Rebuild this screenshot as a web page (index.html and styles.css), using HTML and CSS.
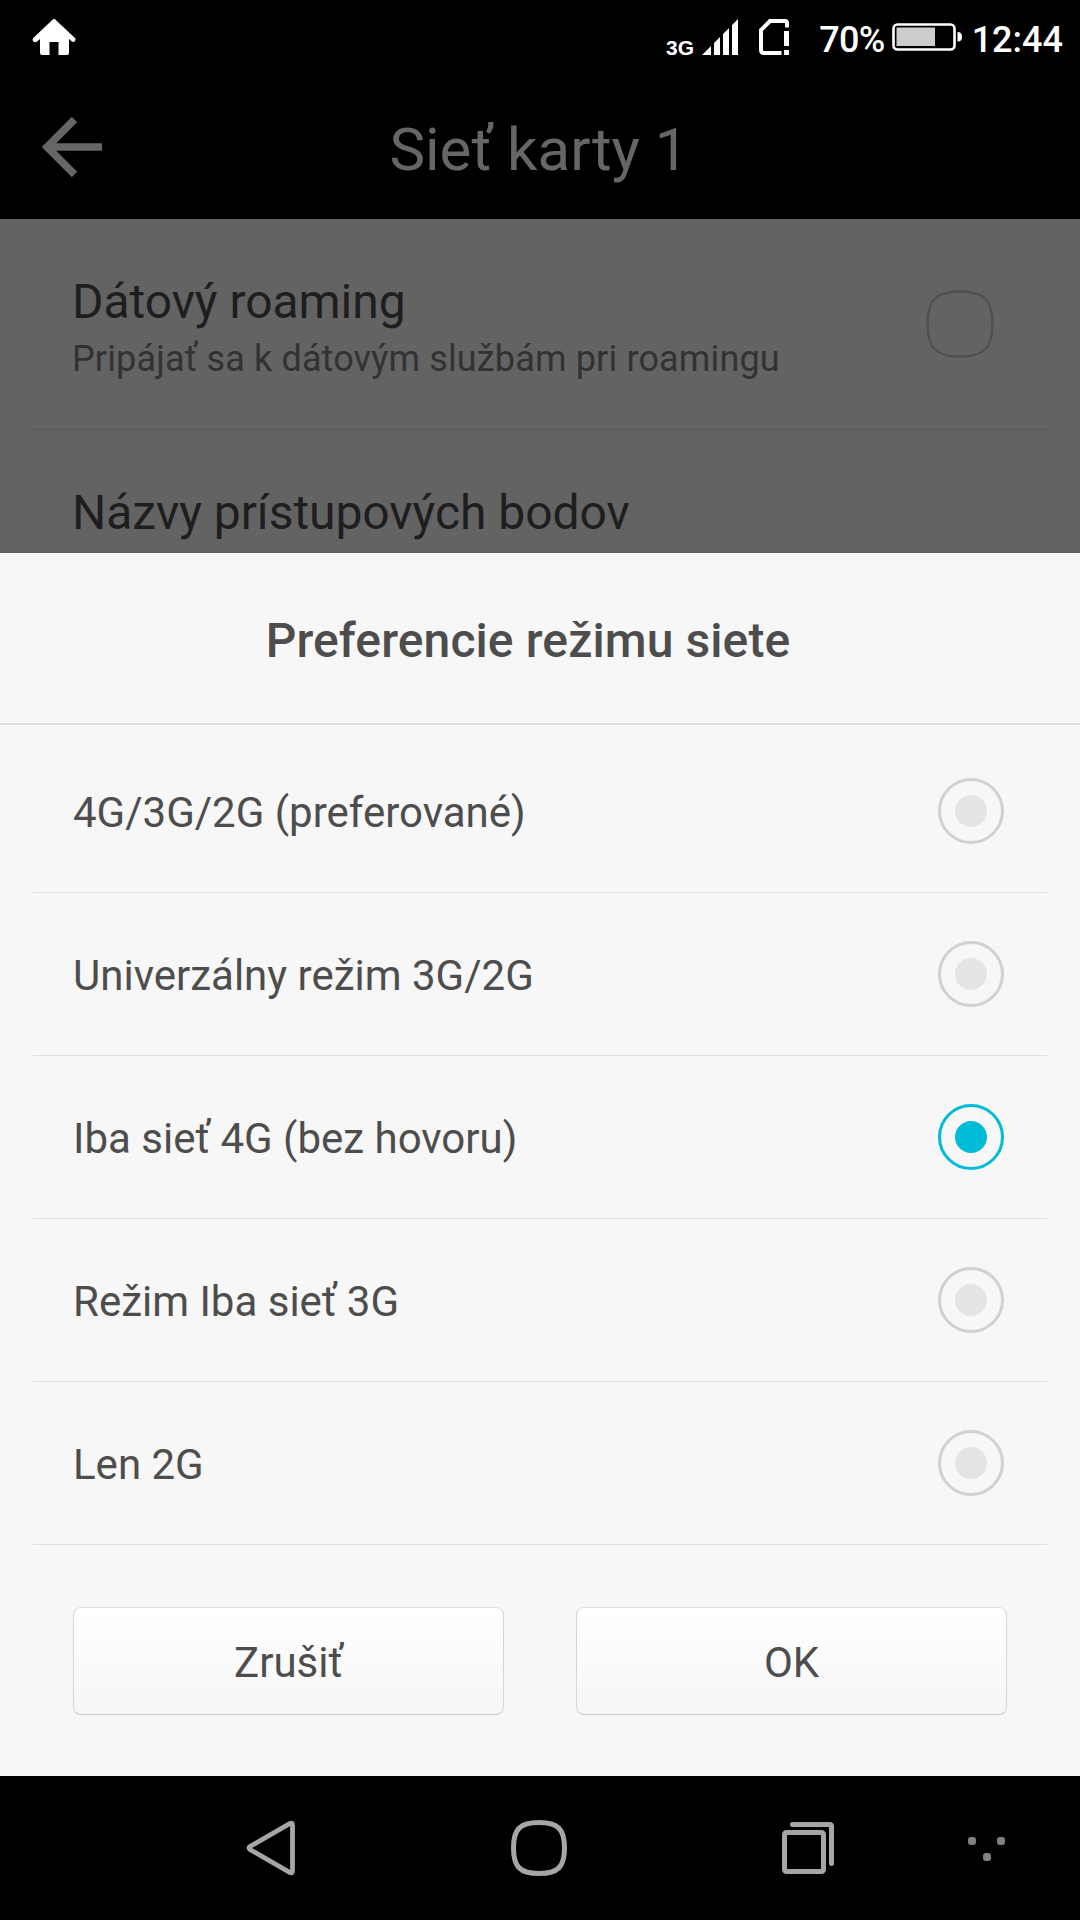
FILE: index.html
```
<!DOCTYPE html>
<html lang="sk">
  <head>
    <meta charset="UTF-8" />
    <meta name="viewport" content="width=device-width, initial-scale=1.0" />
    <title>Sieť karty 1</title>
    <link rel="stylesheet" href="styles.css">
  </head>
  <body>
    <div class="status-bar">
      <svg class="home-icon" width="44" height="37" viewBox="0 0 44 37">
        <path d="M20 1.2 Q22 -1 24 1.2 L43 19 Q44 20.5 43 22 Q41.5 23.5 40 22.5 L37 20 V34 Q37 36 35 36 H26.500 V23 H17.500 V36 H10 Q8 36 8 34 V20 L5 22.500 Q3 24 1.500 22.500 Q0 21 1 19.200 Z" fill="#fff"/>
      </svg>
      <div class="status-right">
        <svg class="signal" width="73" height="37" viewBox="0 0 73 37">
          <text x="0" y="36" class="network" textLength="28" lengthAdjust="spacingAndGlyphs">3G</text>
          <path d="M36 36 L45 27 V36 Z M48 24 L54 18 V36 H48 Z M57 15 L63 9 V36 H57 Z M66 6 L72 0 V36 H66 Z" fill="#fff"/>
        </svg>
        <svg class="sim" width="30" height="36" viewBox="0 0 30 36">
          <path d="M28 8.500 V4 Q28 2 26 2 H11 L2 11 V31 Q2 34 5 34 H22.500" fill="none" stroke="#fff" stroke-width="4"/>
          <path d="M25 12 H30 V27 H25 Z M25 31 H30 V36 H25 Z" fill="#fff"/>
        </svg>
        <span class="percent">70%</span>
        <svg class="battery" width="70" height="28" viewBox="0 0 70 28">
          <rect x="1.500" y="1.500" width="61" height="25" rx="4" fill="none" stroke="#fff" stroke-width="2.600"/>
          <rect x="4.500" y="4.500" width="38.500" height="18.500" fill="#ccc"/>
          <path d="M65.500 9 Q70 9 70 14 Q70 18.500 65.500 18.500 Z" fill="#fff"/>
        </svg>
        <span class="clock">12:44</span>
      </div>
    </div>
    <div class="header">
      <svg class="back" width="60" height="60" viewBox="0 0 60 60">
        <path d="M32.500 2.500 L5 30 L32.500 57.500 M7 30 H60" fill="none" stroke="#666" stroke-width="7.600"/>
      </svg>
      <h1 class="title">Sieť karty 1</h1>
    </div>
    <div class="settings">
      <div class="setting">
        <div class="setting-text">
          <div class="setting-name">Dátový roaming</div>
          <div class="setting-info">Pripájať sa k dátovým službám pri roamingu</div>
        </div>
        <svg class="checkbox" width="68" height="68" viewBox="0 0 68 68">
          <path d="M34 1.500 C58 1.500 66.500 10 66.500 34 C66.500 58 58 66.500 34 66.500 C10 66.500 1.500 58 1.500 34 C1.500 10 10 1.500 34 1.500 Z" fill="none" stroke="#505050" stroke-width="2.400"/>
        </svg>
      </div>
      <div class="setting">
        <div class="setting-name">Názvy prístupových bodov</div>
      </div>
    </div>
    <div class="dialog">
      <h2 class="dialog-title">Preferencie režimu siete</h2>
      <div class="options">
        <div class="option"><span>4G/3G/2G (preferované)</span><span class="radio"></span></div>
        <div class="option"><span>Univerzálny režim 3G/2G</span><span class="radio"></span></div>
        <div class="option"><span>Iba sieť 4G (bez hovoru)</span><span class="radio checked"></span></div>
        <div class="option"><span>Režim Iba sieť 3G</span><span class="radio"></span></div>
        <div class="option"><span>Len 2G</span><span class="radio"></span></div>
      </div>
      <div class="buttons">
        <button class="btn">Zrušiť</button>
        <button class="btn">OK</button>
      </div>
    </div>
    <div class="navbar">
      <svg class="nav-back" width="50" height="56" viewBox="0 0 50 56">
        <path d="M44 3.500 Q46.500 2.500 46.500 5 V51 Q46.500 53.500 44 52.500 L4 29.500 Q2 28 4 26.500 Z" fill="none" stroke="#a6a6a6" stroke-width="4.800"/>
      </svg>
      <svg class="nav-home" width="56" height="56" viewBox="0 0 56 56">
        <path d="M28 2.500 C47 2.500 53.500 9 53.500 28 C53.500 47 47 53.500 28 53.500 C9 53.500 2.500 47 2.500 28 C2.500 9 9 2.500 28 2.500 Z" fill="none" stroke="#a6a6a6" stroke-width="5"/>
      </svg>
      <svg class="nav-recent" width="52" height="52" viewBox="0 0 52 52">
        <rect x="2.500" y="10.500" width="39" height="39" rx="2" fill="none" stroke="#a6a6a6" stroke-width="5"/>
        <path d="M10.500 2.500 H47.500 Q49.500 2.500 49.500 4.500 V41.500" fill="none" stroke="#a6a6a6" stroke-width="5" stroke-linecap="round"/>
      </svg>
      <svg class="nav-dots" width="38" height="26" viewBox="0 0 38 26">
        <g fill="#808080">
          <rect x="0" y="0" width="8" height="8" rx="3"/>
          <rect x="29" y="0" width="8" height="8" rx="3"/>
          <rect x="15" y="16" width="8" height="8" rx="3"/>
        </g>
      </svg>
    </div>
  </body>
</html>
```

FILE: styles.css
```
* {
  margin: 0;
  padding: 0;
  box-sizing: border-box;
}

body {
  width: 1080px;
  height: 1920px;
  display: flex;
  flex-direction: column;
  font-family: Roboto, sans-serif;
  background: #000;
  color: #4d4d4d;
  overflow: hidden;
}

svg {
  display: block;
  flex-shrink: 0;
}

/* Status bar */
.status-bar {
  height: 72px;
  display: flex;
  justify-content: space-between;
  align-items: flex-start;
  padding: 19px 17px 0 32px;
  color: #fff;
}

.status-right {
  display: flex;
  align-items: flex-start;
  font-size: 36px;
  font-weight: 500;
  line-height: 42px;
}

.signal {
  overflow: visible;
}

.network {
  font-family: "Liberation Sans", sans-serif;
  font-size: 21px;
  font-weight: bold;
  fill: #fff;
}

.sim {
  margin-left: 20px;
}

.percent {
  margin-left: 30px;
  letter-spacing: -0.7px;
}

.battery {
  margin: 4px 10px 0 7px;
}

/* Header */
.header {
  height: 147px;
  padding: 2px 42px 0;
  display: grid;
  grid-template-columns: 60px 1fr 60px;
  align-items: center;
  color: #666;
}

.title {
  margin-top: 6px;
  margin-right: 2px;
  font-size: 60px;
  font-weight: 400;
  text-align: center;
}

/* Dimmed settings list behind the dialog */
.settings {
  height: 334px;
  padding: 0 33px;
  background: #636363;
  overflow: hidden;
}

.setting {
  height: 211px;
  padding: 55px 53px 0 39px;
  display: flex;
  justify-content: space-between;
  border-bottom: 1px solid #5a5a5a;
}

.setting-name {
  font-size: 48px;
  line-height: 56px;
  letter-spacing: -0.05px;
  color: #1e1e1e;
}

.setting-info {
  margin-top: 7px;
  font-size: 36px;
  line-height: 44px;
  letter-spacing: 0.15px;
  color: #323232;
}

.checkbox {
  margin-top: 16px;
}

/* Dialog */
.dialog {
  height: 1223px;
  background: #f7f7f7;
}

.dialog-title {
  height: 172px;
  padding: 4px 24px 0 0;
  border-bottom: 2px solid #dfdfdf;
  font-size: 48px;
  font-weight: 500;
  line-height: 167px;
  letter-spacing: 0.1px;
  text-align: center;
}

.options {
  padding: 5px 33px 0;
}

.option {
  height: 163px;
  padding: 2px 43px 0 40px;
  display: flex;
  align-items: center;
  justify-content: space-between;
  border-bottom: 1px solid #dfdfdf;
  font-size: 42px;
}

.radio {
  width: 66px;
  height: 66px;
  margin-bottom: 2px;
  display: flex;
  align-items: center;
  justify-content: center;
  border: 3px solid #d1d1d1;
  border-radius: 50%;
}

.radio::before {
  content: '';
  width: 32px;
  height: 32px;
  border-radius: 50%;
  background: #e4e4e4;
}

.radio.checked {
  border-color: #00bcd7;
}

.radio.checked::before {
  background: #00bcd7;
}

.buttons {
  display: flex;
  gap: 72px;
  padding: 62px 73px 0;
}

.btn {
  flex: 1;
  height: 108px;
  padding-top: 3px;
  border: 1px solid #d6d6d6;
  border-top-color: #e0e0e0;
  border-bottom-color: #c8c8c8;
  border-radius: 8px;
  background: linear-gradient(#fff, #f6f6f6);
  font-family: inherit;
  font-size: 42px;
  color: #4d4d4d;
}

/* Navigation bar */
.navbar {
  flex: 1;
  display: flex;
  align-items: flex-start;
  padding: 44px 0 0 246px;
}

.nav-home {
  margin-left: 215px;
}

.nav-recent {
  margin: 2px 0 0 215px;
}

.nav-dots {
  margin: 17px 0 0 134px;
}
```
